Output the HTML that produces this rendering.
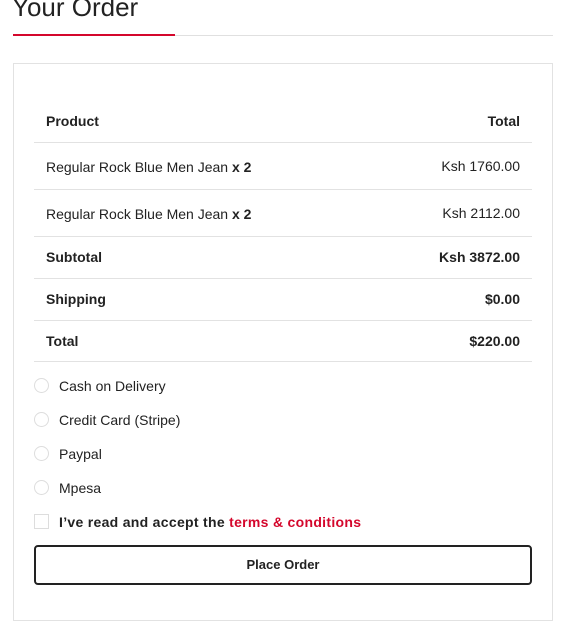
<!DOCTYPE html>
<html><head><meta charset="utf-8"><style>
*{box-sizing:border-box;margin:0;padding:0}
body{width:561px;height:625px;background:#fff;font-family:"Liberation Sans",sans-serif;color:#222;position:relative;overflow:hidden}
.a{position:absolute}
h2{position:absolute;left:12px;top:-9px;font-size:26px;font-weight:400;color:#222;line-height:32px}
.t{position:absolute;font-size:14px;line-height:18px;white-space:nowrap}
.b{font-weight:700}
.line{position:absolute;left:34px;width:498px;height:1px;background:#e2e2e2}
.r{right:41px}
.rad{position:absolute;left:34px;width:15px;height:15px;border:1px solid #ddd;border-radius:50%}
</style></head><body>
<h2>Your Order</h2>
<div class="a" style="left:13px;top:35px;width:540px;height:1px;background:#e0e0e0"></div>
<div class="a" style="left:13px;top:34px;width:162px;height:2px;background:#d4072c"></div>
<div class="a" style="left:13px;top:63px;width:540px;height:558px;border:1px solid #e2e2e2"></div>

<div class="t b" style="left:46px;top:112px">Product</div>
<div class="t b r" style="top:112px">Total</div>
<div class="line" style="top:142px"></div>
<div class="t" style="left:46px;top:158px">Regular Rock Blue Men Jean <b>x 2</b></div>
<div class="t r" style="top:157px">Ksh 1760.00</div>
<div class="line" style="top:189px"></div>
<div class="t" style="left:46px;top:205px">Regular Rock Blue Men Jean <b>x 2</b></div>
<div class="t r" style="top:204px">Ksh 2112.00</div>
<div class="line" style="top:236px"></div>
<div class="t b" style="left:46px;top:248px">Subtotal</div>
<div class="t b r" style="top:248px">Ksh 3872.00</div>
<div class="line" style="top:278px"></div>
<div class="t b" style="left:46px;top:290px">Shipping</div>
<div class="t b r" style="top:290px">$0.00</div>
<div class="line" style="top:320px"></div>
<div class="t b" style="left:46px;top:332px">Total</div>
<div class="t b r" style="top:332px">$220.00</div>
<div class="line" style="top:361px"></div>

<div class="rad" style="top:378px"></div><div class="t" style="left:59px;top:377px">Cash on Delivery</div>
<div class="rad" style="top:412px"></div><div class="t" style="left:59px;top:411px">Credit Card (Stripe)</div>
<div class="rad" style="top:446px"></div><div class="t" style="left:59px;top:445px">Paypal</div>
<div class="rad" style="top:480px"></div><div class="t" style="left:59px;top:479px">Mpesa</div>
<div class="a" style="left:34px;top:514px;width:15px;height:15px;border:1px solid #ddd"></div>
<div class="t b" style="left:59px;top:513px;letter-spacing:0.3px">I’ve read and accept the <span style="color:#d4072c">terms &amp; conditions</span></div>
<div class="a" style="left:34px;top:545px;width:498px;height:40px;border:2px solid #222;border-radius:4px;font-size:13px;font-weight:700;text-align:center;line-height:36px">Place Order</div>
</body></html>
